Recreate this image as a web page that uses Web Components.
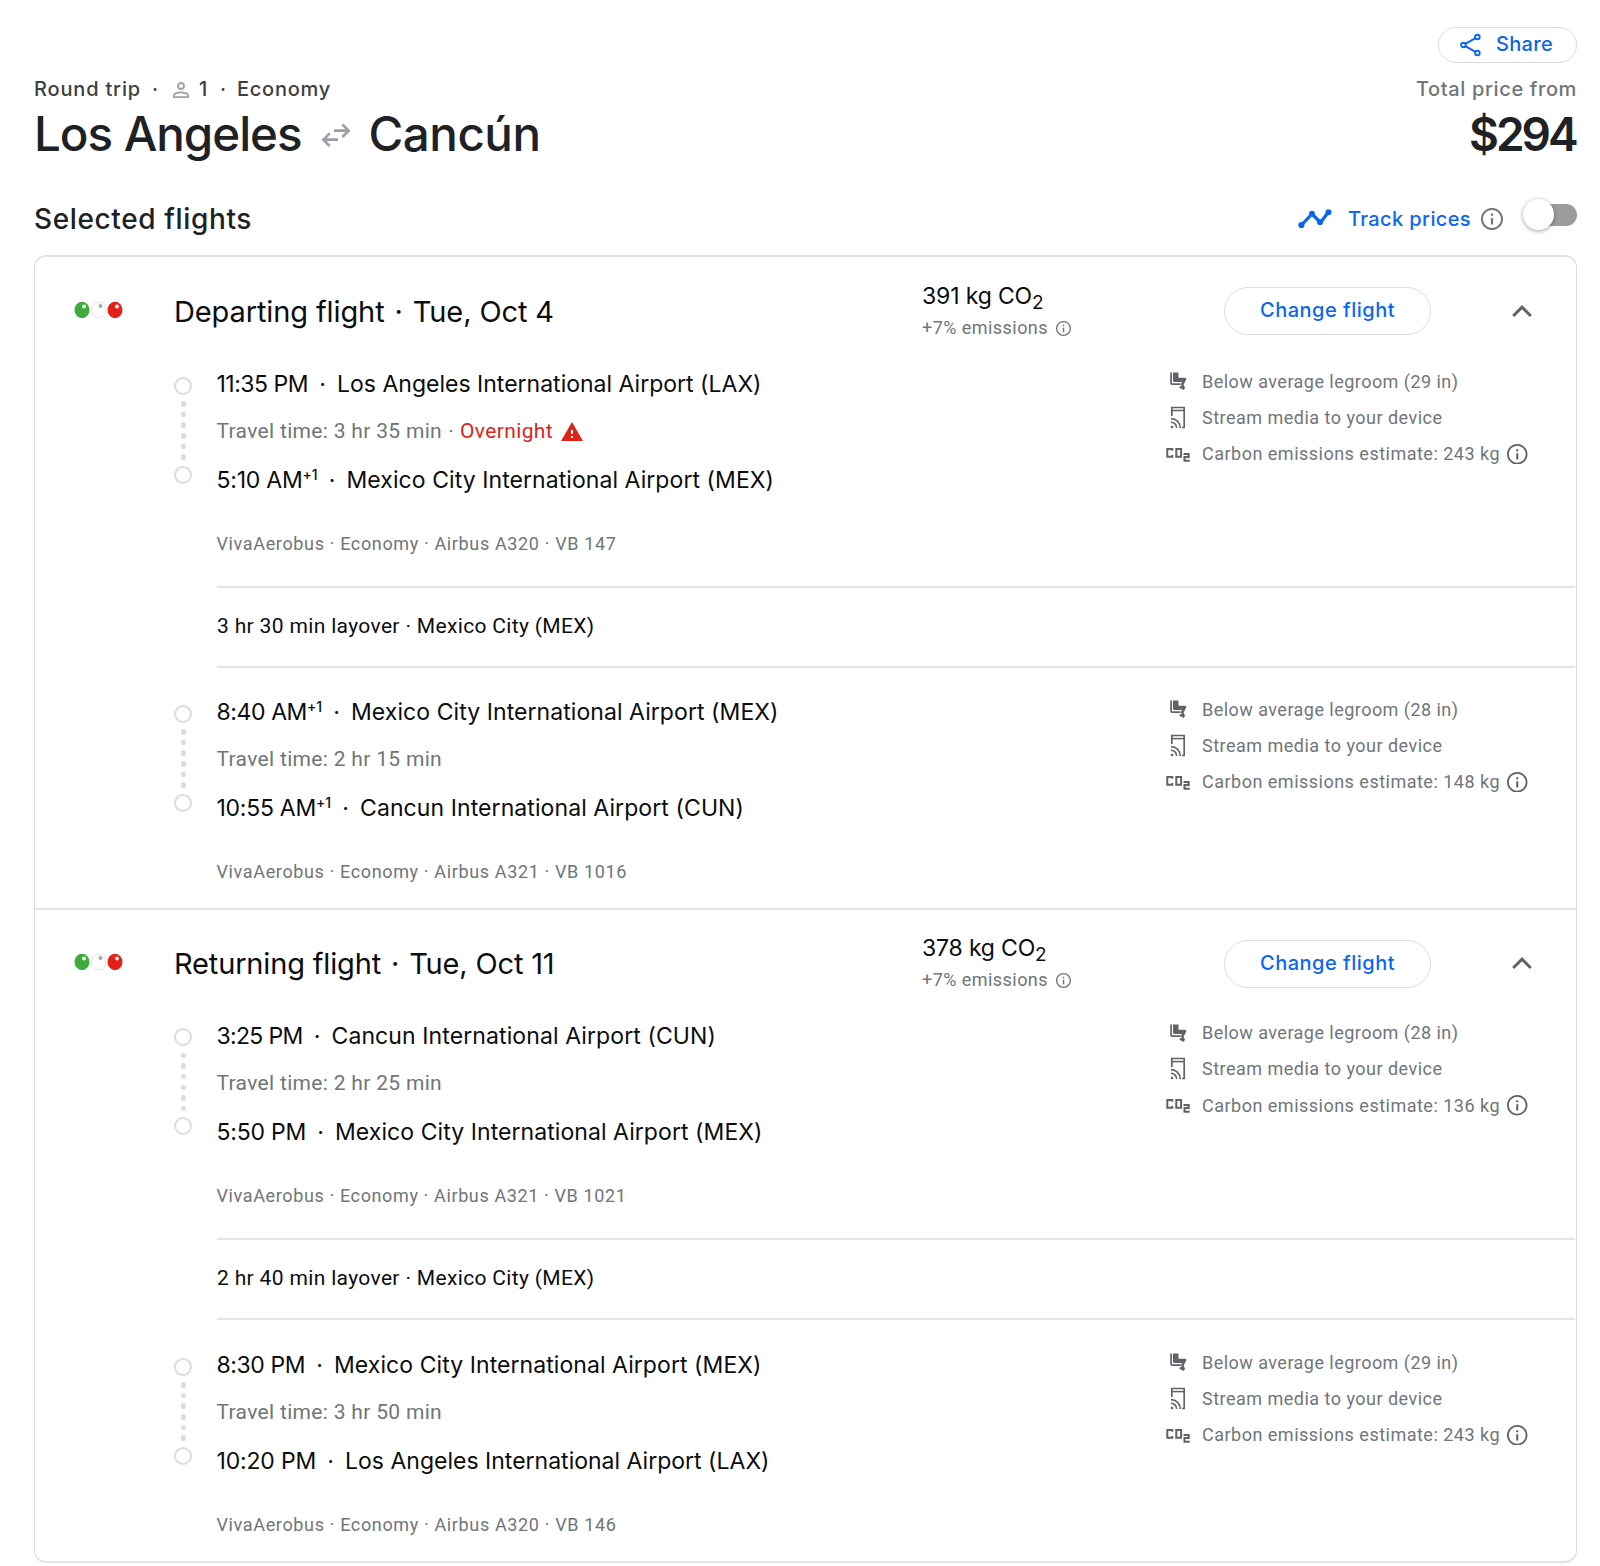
<!DOCTYPE html>
<html lang="en">
<head>
<meta charset="utf-8">
<title>Los Angeles to Cancún</title>
<style>
html,body{margin:0;background:#fff}
body{font-family:Inter,Roboto,sans-serif;color:#0c0d0f}
</style>
</head>
<body>
<trip-page></trip-page>
<script>
const define=(name,html,extra)=>{
  customElements.define(name,class extends HTMLElement{
    connectedCallback(){
      if(this.shadowRoot)return;
      const root=this.attachShadow({mode:'open'});
      root.innerHTML=typeof html==='function'?html(this):html;
      if(extra)extra(this,root);
    }
  });
};

/* Text set to a given width by tracking. */
define('fit-label',`<style>:host{display:block;white-space:nowrap;flex:none}span{display:inline-block}</style><span><slot></slot></span>`,(host,root)=>{
  const w=parseFloat(host.getAttribute('w'));
  host.style.width=w+'px';
  const natural=root.querySelector('span').getBoundingClientRect().width;
  const n=host.textContent.length;
  host.style.letterSpacing=((w-natural)/n).toFixed(4)+'px';
});

const ICONS={
  share:['0 0 22 24','<g fill="none" stroke="currentColor" stroke-width="1.9"><circle cx="3.4" cy="12" r="2.3"/><circle cx="17.4" cy="4" r="2.3"/><circle cx="17.4" cy="20" r="2.3"/><path d="M5.4 10.9l10-5.8M5.4 13.1l10 5.8"/></g>'],
  person:['0 0 16 16','<g fill="none" stroke="currentColor" stroke-width="1.800"><circle cx="8" cy="4" r="3"/><path d="M.9 15.100v-1.700C.9 11.400 5 10.300 8 10.300s7.100 1.100 7.100 3.100v1.700z"/></g>'],
  swap:['0 0 30 24','<g fill="none" stroke="currentColor" stroke-width="2.7"><path d="M13 7.700h14M21.400 1.400l6.200 6.300-6.200 6.300M17 16.700H3M8.600 10.400l-6.200 6.300 6.200 6.300"/></g>'],
  trend:['0 0 34 20','<path d="M3.200 16.300L14 5l8.500 8.500L30.500 3" fill="none" stroke="currentColor" stroke-width="3.2"/><g fill="currentColor"><circle cx="3.400" cy="16" r="3.100"/><circle cx="14" cy="4.600" r="2.900"/><circle cx="22" cy="13.200" r="2.900"/><circle cx="30.500" cy="3.200" r="3"/></g>'],
  info:['2 2 20 20','<path fill="currentColor" d="M11 7h2v2h-2zm0 4h2v6h-2zm1-9C6.480 2 2 6.480 2 12s4.480 10 10 10 10-4.480 10-10S17.520 2 12 2zm0 18.200c-4.500 0-8.200-3.700-8.200-8.200S7.500 3.800 12 3.800s8.200 3.700 8.200 8.200-3.700 8.200-8.200 8.200z"/>'],
  chevron:['0 0 20 14','<path d="M1.200 12L10 3.200 18.800 12" fill="none" stroke="currentColor" stroke-width="3"/>'],
  warn:['1 2 22 19','<path fill="currentColor" fill-rule="evenodd" d="M1 21h22L12 2 1 21zm12-3h-2v-2h2v2zm0-4h-2v-4h2v4z"/>'],
  seat:['0 0 17 19','<path fill="currentColor" d="M.2.5h1.700v10.200q0 .6.600.600h8.200v1.700H2.200q-2 0-2-2zM3 .5h5.500v5.300h6.700q1.500.1 1.100 1.500l-2.700 5.400 1.400 3-1.300 2.400-4.300-2.300.6-1.800 1.800.2-.8-2 .9-2.200H4.600Q3 10 3 8.500z"/>'],
  stream:['0 0 16 24','<g fill="none" stroke="currentColor"><path stroke-width="1.700" d="M1.800 10V1.500h12.400v20H12"/><path stroke-width="1.500" d="M1.800 4.600h12.400"/><path stroke-width="1.600" d="M1 12.600a9.300 9.300 0 0 1 9.300 9.300M1 16.300a5.600 5.600 0 0 1 5.600 5.600"/></g><circle cx="2" cy="21" r="1.300" fill="currentColor"/>'],
  co2:['0 0 25 15','<g fill="none" stroke="currentColor" stroke-width="2"><path d="M6.300 3.800V2H1.300v7.700h5V7.900M10.300 2h4.800v7.700h-4.800zM17.500 6.900h5.200v3.200h-4.200v3.700h5.200"/></g>'],
  carrier:['0 0 50 18','<ellipse cx="8" cy="9" rx="7.500" ry="8.200" fill="#3fab3f"/><ellipse cx="24.500" cy="9" rx="7.300" ry="8" fill="#fff" stroke="#e4e4e4" stroke-width="1"/><ellipse cx="41" cy="9" rx="7.500" ry="8.200" fill="#e32119"/><circle cx="10" cy="5.600" r="2" fill="#e8ffe8"/><circle cx="26.500" cy="5" r="2" fill="#a9a9a9"/><circle cx="43" cy="5.600" r="2" fill="#ffecec"/>']
};
define('ui-icon',h=>{
  const [vb,body]=ICONS[h.getAttribute('name')];
  return `<style>:host{display:block;flex:none;width:${h.getAttribute('w')}px;height:${h.getAttribute('h')}px}svg{display:block;width:100%;height:100%}</style><svg viewBox="${vb}" preserveAspectRatio="none">${body}</svg>`;
});

define('pill-button',`<style>:host{display:flex;align-items:center;box-sizing:border-box;border:1px solid #dadce0;border-radius:24px;color:#0b66ee;font-weight:500;font-size:20px}</style><slot></slot>`);

define('toggle-switch',`<style>:host{display:flex;align-items:center;width:54px;height:31px;flex:none}
.track{position:relative;flex:1;margin-left:7px;height:21.500px;border-radius:11px;background:#9c9c9c}
.knob{position:absolute;left:-7px;top:-5px;width:31px;height:31px;border-radius:50%;background:#fff;box-shadow:0 1px 4px rgba(0,0,0,.38)}</style><div class="track"><div class="knob"></div></div>`);

define('trip-header',`<style>
:host{display:block;height:255px;box-sizing:border-box;padding:27px 23px 0 34px}
.row{display:flex;align-items:center}
.between{justify-content:space-between}
.share{justify-content:flex-end;height:36px}
.share pill-button{width:139px;height:36px;padding-left:21px;gap:14px}
.share fit-label{line-height:32px;padding-bottom:2px}
.meta{height:34px;font-size:20px;line-height:34px;font-weight:500;color:#3c4043;margin-top:9px}
.meta .grey{color:#70757a}
.dot{text-align:center}
.meta ui-icon{color:#9aa0a6}
.title{height:56px;font-size:47.500px;line-height:56px;font-weight:500;color:#202124}
.title ui-icon{color:#9aa0a6}
.title .price{font-size:46px;font-weight:600;margin-right:1.500px}
.sub{height:50px;margin-top:32px}
.sub .h{font-size:28px;line-height:36px;font-weight:500;color:#202124}
.track{color:#0b66ee;font-size:20px;font-weight:500;line-height:30px}
.track .i{color:#70757a}
</style>
<div class="row share"><pill-button><ui-icon name="share" w="22" h="24"></ui-icon><fit-label w="57">Share</fit-label></pill-button></div>
<div class="row between meta">
 <div class="row"><fit-label w="107">Round trip</fit-label><span class="dot" style="width:28px">·</span><ui-icon name="person" w="16" h="16" style="margin:2px 10px 0 4px"></ui-icon><fit-label w="10">1</fit-label><span class="dot" style="width:28px">·</span><fit-label w="94">Economy</fit-label></div>
 <fit-label class="grey" w="161">Total price from</fit-label>
</div>
<div class="row between title">
 <div class="row"><fit-label w="267.5">Los Angeles</fit-label><ui-icon name="swap" w="30" h="24" style="margin:2px 18px 0 19px"></ui-icon><fit-label w="172">Cancún</fit-label></div>
 <fit-label class="price" w="106.5">$294</fit-label>
</div>
<div class="row between sub">
 <fit-label class="h" w="218">Selected flights</fit-label>
 <div class="row track"><ui-icon name="trend" w="34" h="20"></ui-icon><fit-label w="123" style="margin:0 10px 0 16px">Track prices</fit-label><ui-icon class="i" name="info" w="22" h="22"></ui-icon><toggle-switch style="margin:-8px 0 0 20px"></toggle-switch></div>
</div>`);

define('flight-header',h=>`<style>
:host{display:flex;height:111px;box-sizing:border-box;padding:21px 43px 0 39px;align-items:flex-start}
.name{font-size:29px;line-height:40px;margin:14px 0 0 50px;width:748px}
.name b{font-weight:400;padding:0 2px}
.co{width:302px;margin-top:1px}
.kg{font-size:23px;line-height:34px}
sub{font-size:19px;line-height:0;vertical-align:-5px}
.em{display:flex;align-items:center;font:18px/24px Roboto,sans-serif;color:#70757a;gap:8px;margin-top:3px}
pill-button{width:207px;height:48px;margin-top:9px;padding-left:35px;font-weight:500}
pill-button fit-label{line-height:30px;padding-bottom:2px}
.chev{color:#5f6368;margin:26px 0 0 81px}
</style>
<ui-icon name="carrier" w="50" h="18" style="margin-top:23px"></ui-icon>
<div class="name"><fit-label w="${h.getAttribute('w')}">${h.getAttribute('title-text')}<b> · </b>${h.getAttribute('day')}</fit-label></div>
<div class="co"><div class="kg"><fit-label w="${h.getAttribute('kw')}">${h.getAttribute('kg')} kg CO<sub>2</sub></fit-label></div><div class="em"><fit-label w="126">+7% emissions</fit-label><ui-icon name="info" w="15" h="15"></ui-icon></div></div>
<pill-button style="margin-top:${h.getAttribute('bt')}px"><fit-label w="135">Change flight</fit-label></pill-button>
<ui-icon class="chev" name="chevron" w="20" h="14"></ui-icon>`);

define('leg-rail',`<style>:host{display:flex;flex-direction:column;align-items:center;width:18px;flex:none}
i{box-sizing:border-box;width:18px;height:18px;border:2px solid #dadce0;border-radius:50%}
div{display:flex;flex-direction:column;gap:5.200px;padding:6.500px 0 6px 1px}
b{width:5.500px;height:5.500px;border-radius:50%;background:#dadce0}</style><i></i><div><b></b><b></b><b></b><b></b><b></b><b></b></div><i></i>`);

define('leg-stop',h=>{const sup=h.getAttribute('plus');return `<style>:host{display:flex;font-size:23px;line-height:32px;height:32px}
.sup{font-size:14px;line-height:20px;font-weight:500;padding-top:1px}.dot{width:29px;text-align:center}</style>
<fit-label w="${h.getAttribute('tw')}">${h.getAttribute('time')}</fit-label>${sup?`<fit-label class="sup" w="15">${sup}</fit-label>`:''}<span class="dot">·</span><fit-label w="${h.getAttribute('aw')}">${h.getAttribute('airport')}</fit-label>`});

define('amenity-row',h=>`<style>:host{display:flex;align-items:center;height:36.250px;font:18px/26px Roboto,sans-serif;color:#70757a}
.ic{width:37px;flex:none;display:flex;color:#5f6368;}.ic ui-icon{margin-left:${h.getAttribute('ml')}px}.in{margin-left:7px;color:#5f6368}</style>
<div class="ic"><ui-icon name="${h.getAttribute('icon')}" w="${h.getAttribute('iw')}" h="${h.getAttribute('ih')}"></ui-icon></div><fit-label w="${h.getAttribute('w')}">${h.getAttribute('text')}</fit-label>${h.hasAttribute('info')?'<ui-icon class="in" name="info" w="20.5" h="20.5"></ui-icon>':''}`);

define('flight-leg',h=>`<style>
:host{display:flex;box-sizing:border-box;height:218px;padding-left:139px}
leg-rail{margin-top:8.500px}
.main{margin-left:24.500px;width:948.500px}
.travel{display:flex;align-items:center;font:21px/32px Roboto,sans-serif;color:#70757a;margin-top:15px;height:32px}
.travel .o{color:#dc2418;display:flex;align-items:center}
.end{margin-top:17px}
.meta{font:18px/24px Roboto,sans-serif;color:#70757a;margin-top:36px}
.am{margin-top:-4.500px}
</style>
<leg-rail></leg-rail>
<div class="main"><slot name="from"></slot>
<div class="travel"><fit-label w="225.5">Travel time: ${h.getAttribute('travel')}</fit-label>${h.hasAttribute('overnight')?'<span style="width:18px;text-align:center">·</span><span class="o"><fit-label w="93">Overnight</fit-label><ui-icon name="warn" w="22" h="19" style="margin-left:8px"></ui-icon></span>':''}</div>
<div class="end"><slot name="to"></slot></div>
<div class="meta"><fit-label w="${h.getAttribute('mw')}">VivaAerobus · Economy · Airbus ${h.getAttribute('plane')} · VB ${h.getAttribute('num')}</fit-label></div></div>
<div class="am">
<amenity-row icon="seat" iw="17" ih="19" ml="5" w="256.5" text="Below average legroom (${h.getAttribute('leg')} in)"></amenity-row>
<amenity-row icon="stream" iw="16" ih="24" ml="5" w="240.5" text="Stream media to your device"></amenity-row>
<amenity-row icon="co2" iw="25" ih="15" ml="1" w="298" info text="Carbon emissions estimate: ${h.getAttribute('carbon')} kg"></amenity-row>
</div>`);

define('layover-row',h=>`<style>:host{display:block;box-sizing:border-box;height:82px;margin:0 1px 0 182px;border:solid #e4e6e9;border-width:2px 0;padding-top:21px;font:21px/34px Roboto,sans-serif}</style><fit-label w="377.5">${h.getAttribute('text')}</fit-label>`);

define('flight-card',`<style>:host{display:block;box-sizing:border-box;margin:0 23px 0 34px;height:1308px;border:solid #dadce0;border-width:2px 1px;border-top-color:#e2e3e7;border-bottom-color:#e2e3e7;border-radius:12px;overflow:hidden}
section+section{border-top:2px solid #e4e6e9}
section{box-sizing:border-box;height:651px}
section+section flight-header{margin:-1px 0 -.500px}
.gap{height:28px}
section+section .gap{height:29.500px}</style>
<section>
<flight-header title-text="Departing flight" day="Tue, Oct 4" w="380" kg="391" kw="121.5" bt="9"></flight-header>
<flight-leg travel="3 hr 35 min" overnight mw="400" plane="A320" num="147" leg="29" carbon="243"><leg-stop slot="from" time="11:35 PM" tw="91.5" airport="Los Angeles International Airport (LAX)" aw="424.5"></leg-stop><leg-stop slot="to" time="5:10 AM" plus="+1" tw="86" airport="Mexico City International Airport (MEX)" aw="427.5"></leg-stop></flight-leg>
<layover-row text="3 hr 30 min layover · Mexico City (MEX)"></layover-row><div class="gap"></div>
<flight-leg travel="2 hr 15 min" mw="410.5" plane="A321" num="1016" leg="28" carbon="148"><leg-stop slot="from" time="8:40 AM" plus="+1" tw="90.5" airport="Mexico City International Airport (MEX)" aw="427.5"></leg-stop><leg-stop slot="to" time="10:55 AM" plus="+1" tw="99.5" airport="Cancun International Airport (CUN)" aw="384"></leg-stop></flight-leg>
</section>
<section>
<flight-header title-text="Returning flight" day="Tue, Oct 11" w="380.5" kg="378" kw="124.5" bt="10"></flight-header>
<flight-leg travel="2 hr 25 min" mw="410" plane="A321" num="1021" leg="28" carbon="136"><leg-stop slot="from" time="3:25 PM" tw="86" airport="Cancun International Airport (CUN)" aw="384.5"></leg-stop><leg-stop slot="to" time="5:50 PM" tw="89.5" airport="Mexico City International Airport (MEX)" aw="427.5"></leg-stop></flight-leg>
<layover-row text="2 hr 40 min layover · Mexico City (MEX)"></layover-row><div class="gap"></div>
<flight-leg travel="3 hr 50 min" mw="400" plane="A320" num="146" leg="29" carbon="243"><leg-stop slot="from" time="8:30 PM" tw="88.5" airport="Mexico City International Airport (MEX)" aw="427.5"></leg-stop><leg-stop slot="to" time="10:20 PM" tw="99.5" airport="Los Angeles International Airport (LAX)" aw="424.5"></leg-stop></flight-leg>
</section>`);

define('trip-page',`<style>:host{display:block;width:1600px;height:1566px;overflow:hidden}</style><trip-header></trip-header><flight-card></flight-card>`);
</script>
</body>
</html>
